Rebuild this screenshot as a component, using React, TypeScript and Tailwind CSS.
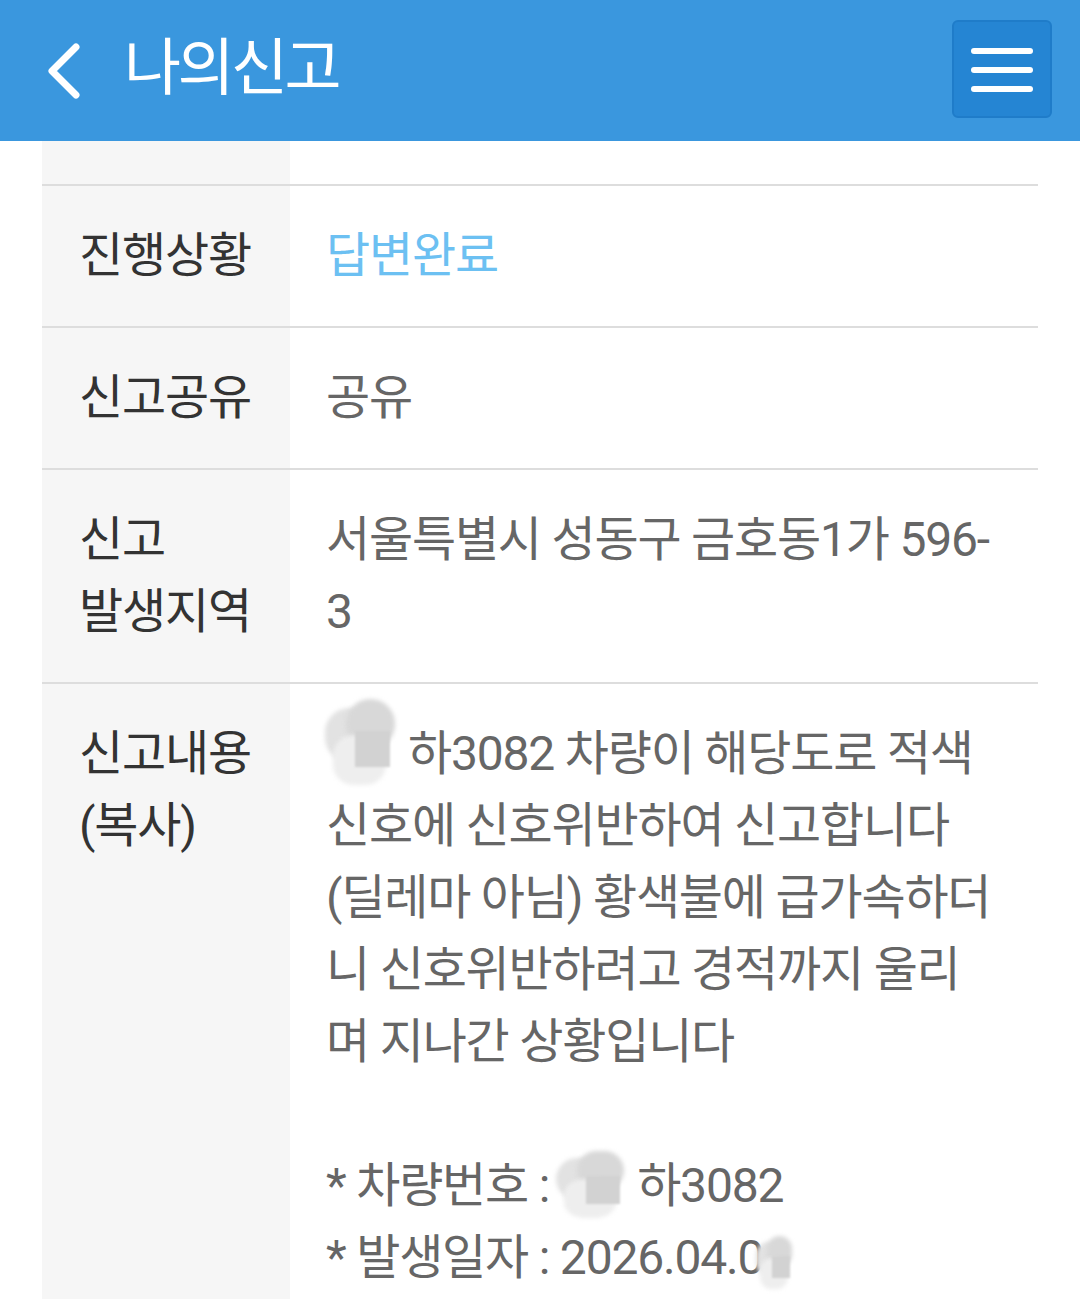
import React from "react";

const FONT = { fontFamily: "Roboto, 'Noto Sans CJK KR', 'Noto Sans', sans-serif" };

function Mask({ w, h = 70, className = "" }: { w: number; h?: number; className?: string }) {
  return (
    <span className={"relative inline-block align-middle shrink-0 " + className} style={{ width: w, height: h }}>
      <span className="absolute left-[6%] top-[10%] w-[55%] h-[60%] rounded-full bg-[#e2e2e2] blur-[2px]" />
      <span className="absolute left-[30%] top-[0%] w-[55%] h-[55%] rounded-full bg-[#d8d8d8] blur-[2px]" />
      <span className="absolute left-[15%] top-[40%] w-[60%] h-[55%] rounded-[40%] bg-[#eeeeee] blur-[2px]" />
      <span className="absolute left-[40%] top-[35%] w-[40%] h-[40%] bg-[#d2d2d2] blur-[1px]" />
    </span>
  );
}

function Row({ label, children, top = false }: { label?: React.ReactNode; children?: React.ReactNode; top?: boolean }) {
  return (
    <div className={"flex " + (top ? "" : "border-t-2 border-[#dddddd]")}>
      <div className={"w-[248px] shrink-0 bg-[#f6f6f6] text-[#333333] " + (top ? "h-[43px]" : "pl-[37px] py-[34px]")}>
        {label}
      </div>
      <div className={"flex-1 " + (top ? "" : "pl-[36px] py-[34px]")}>{children}</div>
    </div>
  );
}

export default function App() {
  return (
    <div className="w-[1080px] h-[1299px] overflow-hidden bg-white" style={FONT}>
      <header className="h-[141px] bg-[#3a97de] flex items-center">
        <svg width="40" height="60" viewBox="0 0 40 60" className="ml-[44px]">
          <path d="M32 6 L8 30 L32 54" fill="none" stroke="white" strokeWidth="7" strokeLinecap="round" strokeLinejoin="round" />
        </svg>
        <h1 className="ml-[40px] text-white text-[62px] leading-none tracking-[-3.5px] -mt-[4px]">나의신고</h1>
        <button className="ml-auto mr-[28px] w-[100px] h-[98px] rounded-[6px] bg-[#2585d3] border-2 border-[#1f7cc9] flex flex-col items-center justify-start pt-[26px] gap-[13px] -mt-[3px]">
          <span className="block w-[62px] h-[6px] rounded-full bg-white" />
          <span className="block w-[62px] h-[6px] rounded-full bg-white" />
          <span className="block w-[62px] h-[6px] rounded-full bg-white" />
        </button>
      </header>
      <div className="mx-[42px] text-[48px] leading-[72px] tracking-[-1.2px]">
        <Row top />
        <Row label="진행상황">
          <span className="text-[#6cc0f2]">답변완료</span>
        </Row>
        <Row label="신고공유">
          <span className="text-[#666666]">공유</span>
        </Row>
        <Row label={<><div>신고</div><div>발생지역</div></>}>
          <div className="text-[#666666] whitespace-nowrap">
            <div>서울특별시 성동구 금호동1가 596-</div>
            <div>3</div>
          </div>
        </Row>
        <Row label={<><div>신고내용</div><div>(복사)</div></>}>
          <div className="text-[#666666] whitespace-nowrap">
            <div className="flex items-center -ml-[6px]">
              <Mask w={88} h={90} className="-mt-[20px]" />
              <span>하3082 차량이 해당도로 적색</span>
            </div>
            <div>신호에 신호위반하여 신고합니다</div>
            <div>(딜레마 아님) 황색불에 급가속하더</div>
            <div>니 신호위반하려고 경적까지 울리</div>
            <div>며 지나간 상황입니다</div>
            <div className="h-[72px]" />
            <div className="flex items-center">
              <span>* 차량번호 :</span>
              <Mask w={86} h={70} className="ml-[2px]" />
              <span>하3082</span>
            </div>
            <div className="flex items-center">
              <span>* 발생일자 : 2026.04.0</span>
              <Mask w={46} h={56} className="-ml-[10px] mt-[12px]" />
            </div>
          </div>
        </Row>
      </div>
    </div>
  );
}
